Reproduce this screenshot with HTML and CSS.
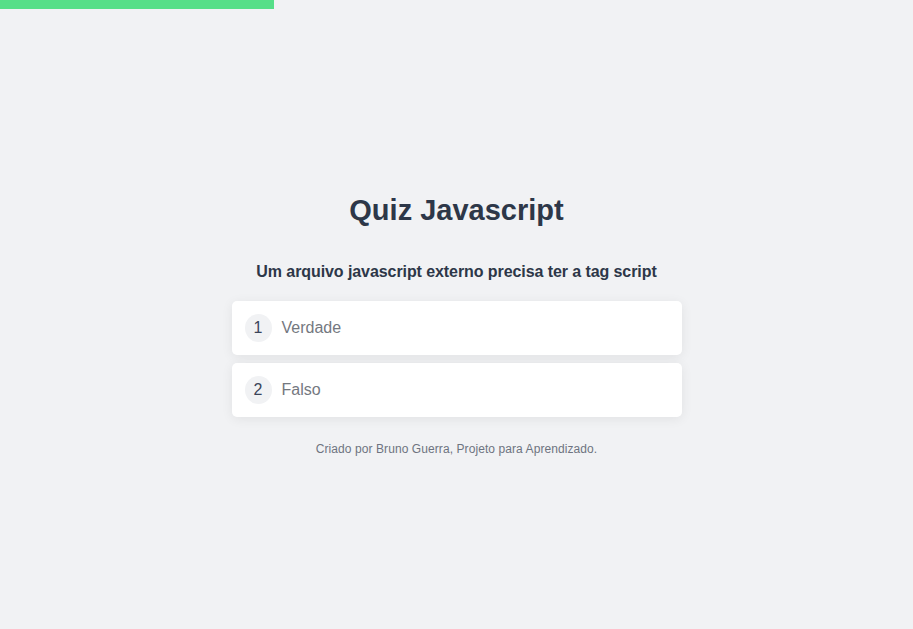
FILE: index.html
```html
<!DOCTYPE html>
<html lang="pt-BR">
<head>
<meta charset="utf-8">
<title>Quiz Javascript</title>
<link rel="stylesheet" href="styles.css">
</head>
<body>
<div class="progress"><div class="progress-fill" style="width: 30%"></div></div>
<main class="quiz">
  <h1 class="title">Quiz Javascript</h1>
  <h2 class="question">Um arquivo javascript externo precisa ter a tag script</h2>
  <ul class="options">
    <li class="option"><span class="num">1</span><span class="label">Verdade</span></li>
    <li class="option"><span class="num">2</span><span class="label">Falso</span></li>
  </ul>
  <p class="footer">Criado por Bruno Guerra, Projeto para Aprendizado.</p>
</main>
</body>
</html>
```
FILE: styles.css
```css
* { box-sizing: border-box; }
html, body { margin: 0; padding: 0; }
body {
  background: #f1f2f4;
  font-family: "Liberation Sans", Arial, sans-serif;
  color: #2d3748;
  min-height: 100vh;
}
.progress { height: 9px; }
.progress-fill { height: 100%; background: #56df88; }
.quiz {
  width: 450px;
  margin: 0 auto;
  padding-top: 183px;
  display: flex;
  flex-direction: column;
  align-items: stretch;
}
.title {
  margin: 0;
  font-size: 29px;
  line-height: 36px;
  font-weight: 700;
  text-align: center;
}
.question {
  margin: 32px 0 0;
  font-size: 16px;
  line-height: 24px;
  font-weight: 700;
  letter-spacing: -0.08px;
  text-align: center;
}
.options {
  list-style: none;
  margin: 17px 0 0;
  padding: 0;
  display: flex;
  flex-direction: column;
  gap: 8px;
}
.option {
  background: #fff;
  border-radius: 5px;
  box-shadow: 0 2px 12px rgba(0,0,0,0.07);
  height: 54px;
  padding: 0 13px;
  display: flex;
  align-items: center;
  gap: 10px;
}
.num {
  width: 27px;
  height: 28px;
  border-radius: 50%;
  background: #f1f2f4;
  display: flex;
  align-items: center;
  justify-content: center;
  font-size: 16px;
  color: #3a4459;
}
.label {
  font-size: 16px;
  color: #74787f;
}
.footer {
  margin: 25px 0 0;
  text-align: center;
  font-size: 12px;
  letter-spacing: 0.08px;
  color: #6e7480;
}
```
